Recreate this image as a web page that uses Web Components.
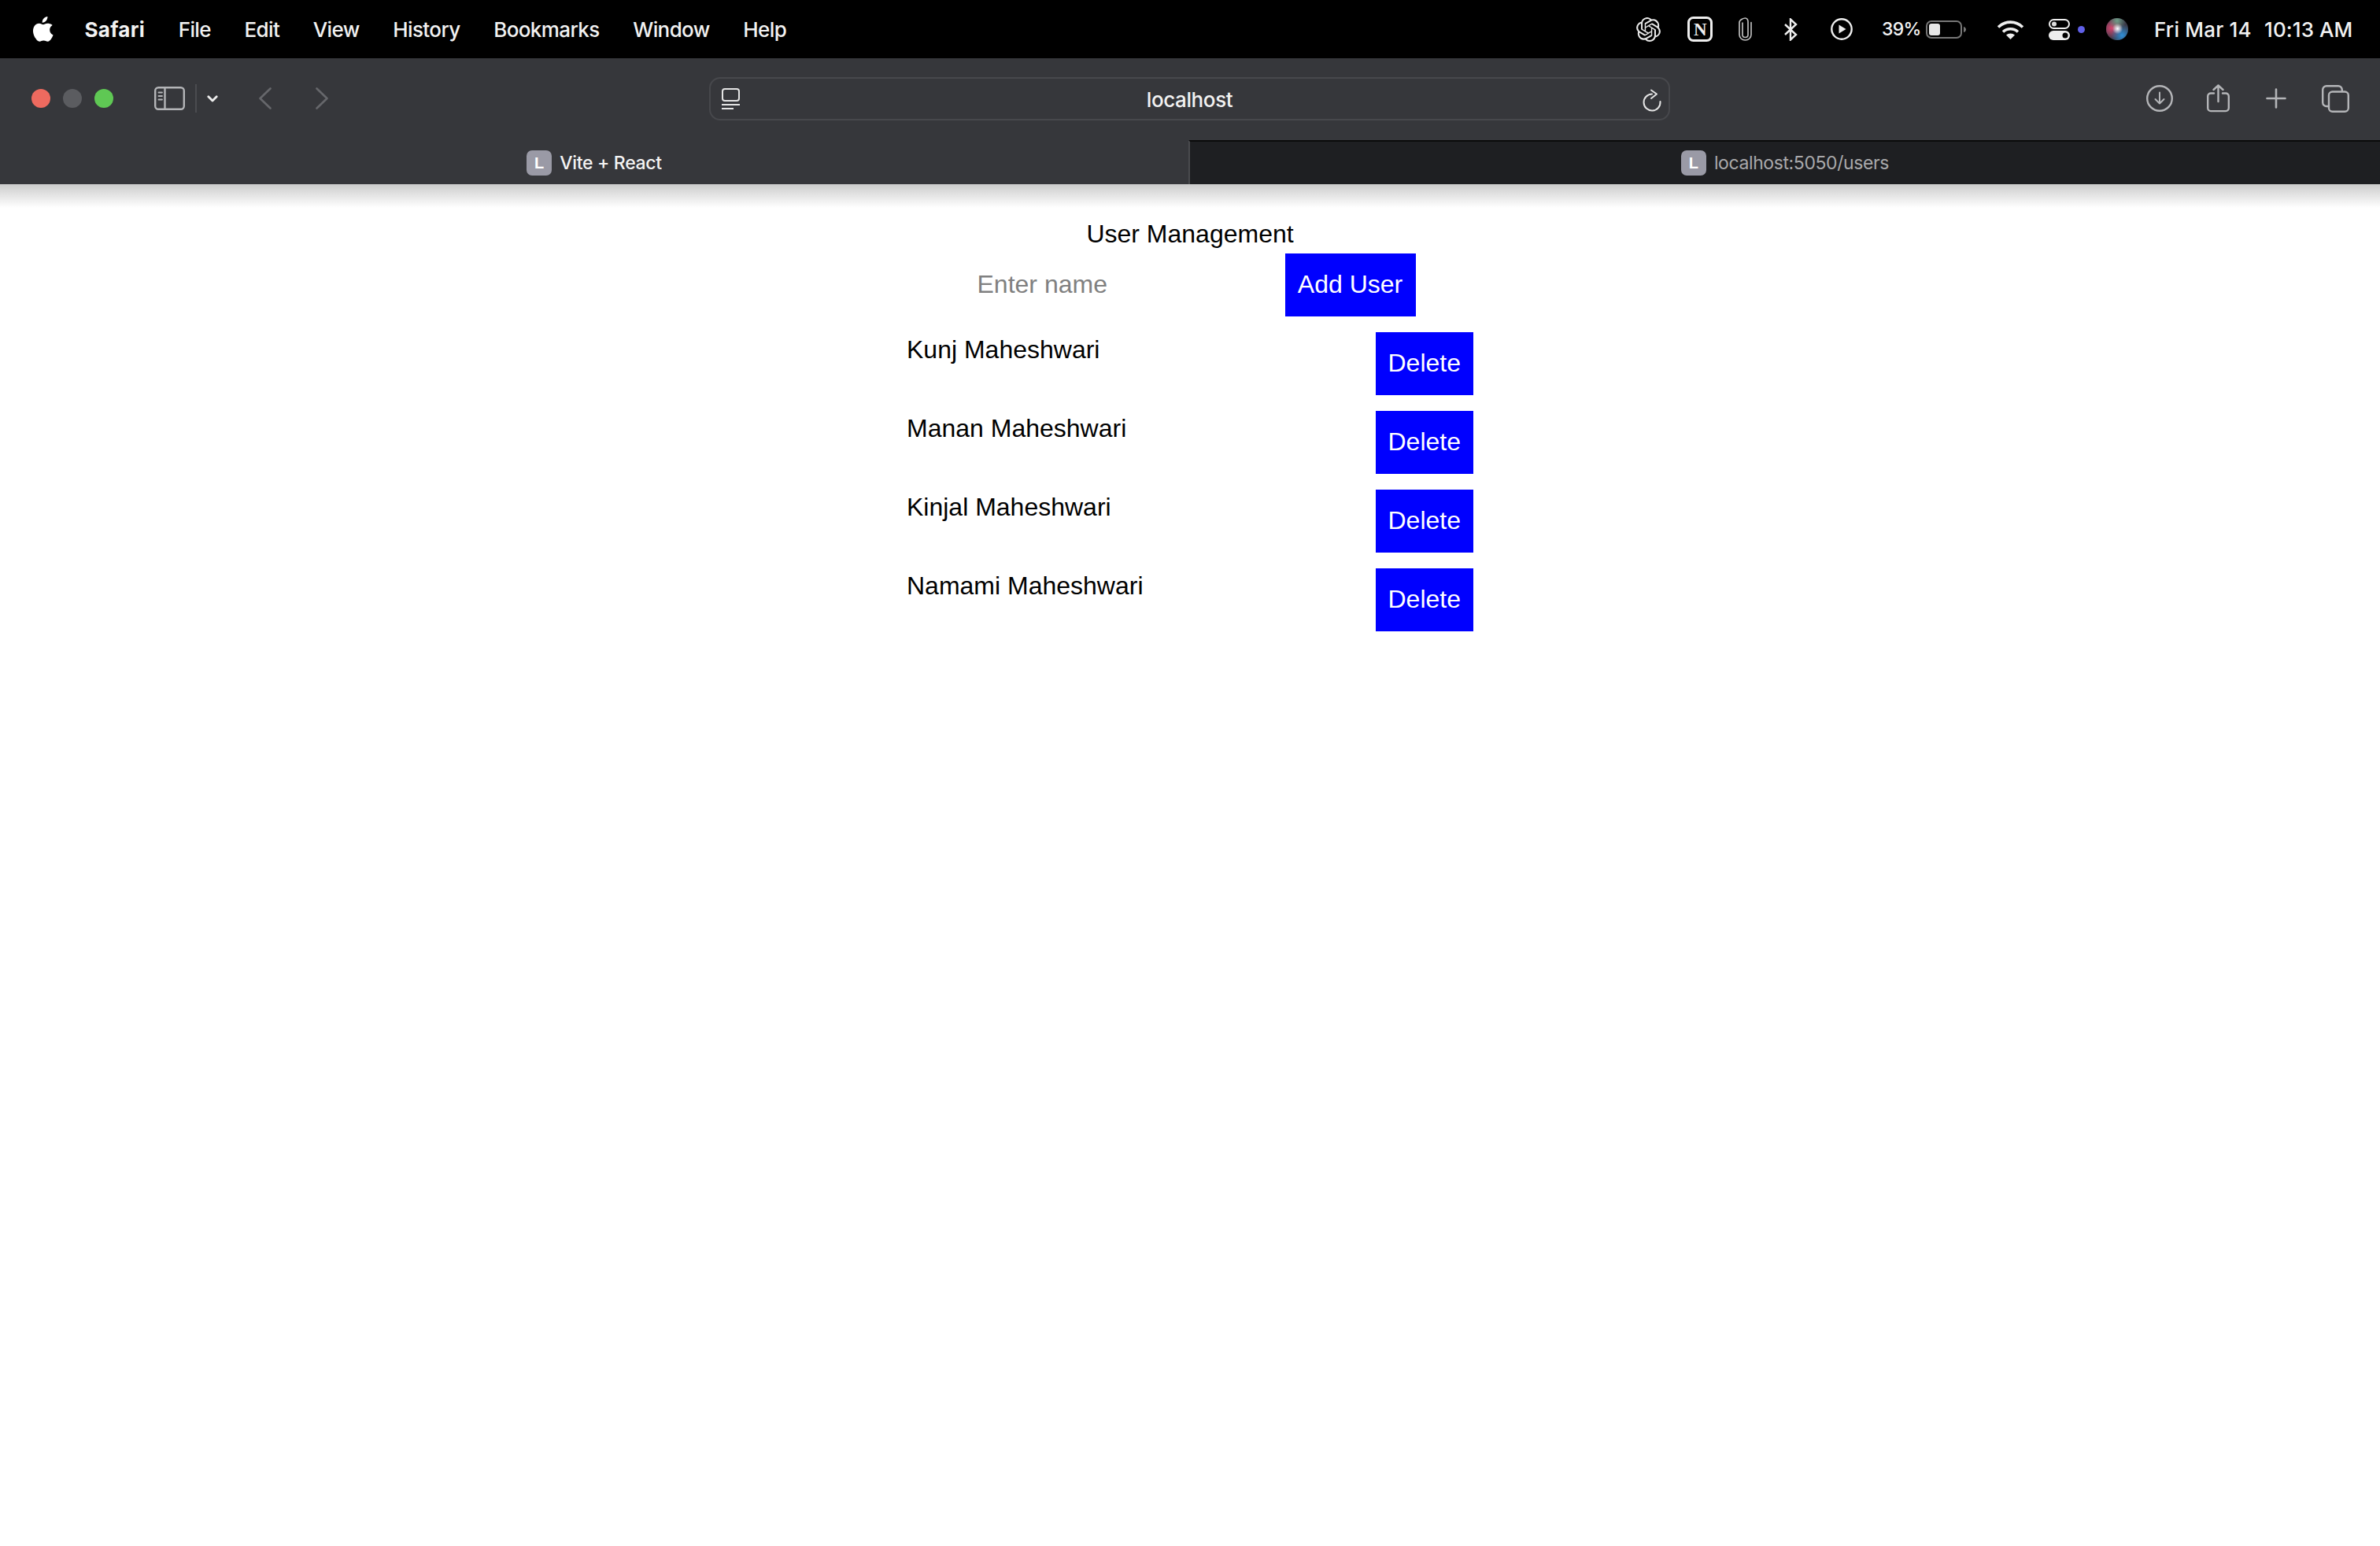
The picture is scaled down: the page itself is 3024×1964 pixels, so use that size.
<!DOCTYPE html>
<html lang="en">
<head>
<meta charset="utf-8">
<title>Vite + React</title>
<style>
  html, body { margin: 0; height: 100%; background: #fff; overflow: hidden; }
  body { display: flex; flex-direction: column; font-family: "Liberation Sans", Arial, sans-serif; }
</style>
</head>
<body>
  <mac-menubar></mac-menubar>
  <safari-toolbar></safari-toolbar>
  <safari-tabs>
    <safari-tab active label="Vite + React"></safari-tab>
    <safari-tab label="localhost:5050/users"></safari-tab>
  </safari-tabs>
  <user-management>
    <user-row name="Kunj Maheshwari"></user-row>
    <user-row name="Manan Maheshwari"></user-row>
    <user-row name="Kinjal Maheshwari"></user-row>
    <user-row name="Namami Maheshwari"></user-row>
  </user-management>

<script>
  const chromeFont = `Inter, "Noto Sans", sans-serif`;

  class MacMenubar extends HTMLElement {
    constructor() {
      super();
      this.attachShadow({ mode: 'open' });
    }

    connectedCallback() {
      const menus = ['File', 'Edit', 'View', 'History', 'Bookmarks', 'Window', 'Help'];
      this.shadowRoot.innerHTML = `
        <style>
          :host {
            display: flex;
            flex: none;
            height: 74px;
            background: #000;
            color: #f2f2f2;
            font: 500 26px ${chromeFont};
            letter-spacing: -0.6px;
            align-items: center;
            justify-content: space-between;
            padding: 0 34px 0 40px;
          }
          .left, .right { display: flex; align-items: center; }
          .left { gap: 42.5px; }
          .left svg { margin-right: -3px; }
          .app { font-weight: 700; letter-spacing: 0.3px; }
          svg { display: block; flex: none; }
          .pct { font-size: 23px; margin-left: 37px; width: 47px; letter-spacing: -0.7px; white-space: nowrap; }
          .date { margin-left: 33px; width: 122px; white-space: nowrap; letter-spacing: 0.2px; }
          .time { margin-left: 18px; width: 113px; white-space: nowrap; letter-spacing: 0.1px; }
        </style>
        <div class="left">
          <svg width="28" height="32" viewBox="0 0 28 32" fill="#fff">
            <path d="M20.4 0c.2 2-.6 3.900-1.700 5.300-1.200 1.400-3.100 2.500-5 2.400-.2-1.900.7-3.900 1.800-5.100C16.700 1.200 18.800.1 20.400 0z"/>
            <path d="M26.700 11c-.2.100-3.500 2-3.500 6 0 4.700 4.100 6.300 4.300 6.400-.1.200-.7 2.300-2.200 4.500-1.300 1.900-2.700 3.800-4.800 3.800-2.100 0-2.700-1.200-5.100-1.200-2.400 0-3.200 1.200-5.100 1.200-2.100.1-3.700-2-5-3.900C2.600 24.300.5 17.500 3.300 12.700c1.400-2.400 3.900-3.900 6.500-3.900 2 0 3.900 1.400 5.100 1.400 1.200 0 3.500-1.700 5.900-1.400 1 0 3.900.4 5.900 2.200z"/>
          </svg>
          <span class="app">Safari</span>
          ${menus.map(m => `<span>${m}</span>`).join('')}
        </div>
        <div class="right">
          <svg width="31" height="31" viewBox="0 0 24 24" fill="#e8e8e8">
            <path d="M22.2819 9.8211a5.9847 5.9847 0 0 0-.5157-4.9108 6.0462 6.0462 0 0 0-6.5098-2.9A6.0651 6.0651 0 0 0 4.9807 4.1818a5.9847 5.9847 0 0 0-3.9977 2.9 6.0462 6.0462 0 0 0 .7427 7.0966 5.98 5.98 0 0 0 .511 4.9107 6.051 6.051 0 0 0 6.5146 2.9001A5.9847 5.9847 0 0 0 13.2599 24a6.0557 6.0557 0 0 0 5.7718-4.2058 5.9894 5.9894 0 0 0 3.9977-2.9001 6.0557 6.0557 0 0 0-.7475-7.0729zm-9.022 12.6081a4.4755 4.4755 0 0 1-2.8764-1.0408l.1419-.0804 4.7783-2.7582a.7948.7948 0 0 0 .3927-.6813v-6.7369l2.02 1.1686a.071.071 0 0 1 .038.052v5.5826a4.504 4.504 0 0 1-4.4945 4.4944zm-9.6607-4.1254a4.4708 4.4708 0 0 1-.5346-3.0137l.142.0852 4.783 2.7582a.7712.7712 0 0 0 .7806 0l5.8428-3.3685v2.3324a.0804.0804 0 0 1-.0332.0615L9.74 19.9502a4.4992 4.4992 0 0 1-6.1408-1.6464zM2.3408 7.8956a4.485 4.485 0 0 1 2.3655-1.9728V11.6a.7664.7664 0 0 0 .3879.6765l5.8144 3.3543-2.0201 1.1685a.0757.0757 0 0 1-.071 0l-4.8303-2.7865A4.504 4.504 0 0 1 2.3408 7.872zm16.5963 3.8558L13.1038 8.364 15.1192 7.2a.0757.0757 0 0 1 .071 0l4.8303 2.7913a4.4944 4.4944 0 0 1-.6765 8.1042v-5.6772a.79.79 0 0 0-.407-.667zm2.0107-3.0231l-.142-.0852-4.7735-2.7818a.7759.7759 0 0 0-.7854 0L9.409 9.2297V6.8974a.0662.0662 0 0 1 .0284-.0615l4.8303-2.7866a4.4992 4.4992 0 0 1 6.6802 4.66zM8.3065 12.863l-2.02-1.1638a.0804.0804 0 0 1-.038-.0567V6.0742a4.4992 4.4992 0 0 1 7.3757-3.4537l-.142.0805L8.704 5.459a.7948.7948 0 0 0-.3927.6813zm1.0976-2.3654l2.602-1.4998 2.6069 1.4998v2.9994l-2.5974 1.4997-2.6067-1.4997Z"/>
          </svg>
          <svg style="margin-left:34px" width="32" height="32" viewBox="0 0 32 32">
            <rect x="1.500" y="1.500" width="29" height="29" rx="6" fill="none" stroke="#eee" stroke-width="3"/>
            <text x="16" y="24" text-anchor="middle" font-family="Liberation Serif" font-weight="700" font-size="23" fill="#eee">N</text>
          </svg>
          <svg style="margin-left:33px" width="17" height="30" viewBox="0 0 17 30" fill="none" stroke="#bbb" stroke-width="1.700" stroke-linecap="round">
            <path d="M5 7v15c0 2 1.500 3.500 3.500 3.500S12 24 12 22V5.500C12 3 10.500 1 8.500 1S1 3 1 6.500V22c0 4 3.300 7 7.500 7s7.500-3 7.500-7V6.500"/>
          </svg>
          <svg style="margin-left:41px" width="17" height="29" viewBox="0 0 17 29" fill="none" stroke="#eee" stroke-width="2.400">
            <path d="M1 8l14 13-7 6.500V1.500l7 6.500L1 21"/>
          </svg>
          <svg style="margin-left:42px" width="28" height="28" viewBox="0 0 28 28">
            <circle cx="14" cy="14" r="12.700" fill="none" stroke="#eee" stroke-width="2.400"/>
            <path d="M10.500 8.500v11l9-5.500z" fill="#eee"/>
          </svg>
          <span class="pct">39%</span>
          <svg style="margin-left:9px" width="51" height="23" viewBox="0 0 51 23">
            <rect x="1" y="1" width="44" height="21" rx="6" fill="none" stroke="#777" stroke-width="2"/>
            <rect x="4" y="4" width="14" height="15" rx="3" fill="#e8e8e8"/>
            <path d="M48 8c2 .5 3 2 3 3.500s-1 3-3 3.500z" fill="#777"/>
          </svg>
          <svg style="margin-left:39px" width="35" height="25" viewBox="0 0 35 25" fill="none" stroke="#eee" stroke-width="3.600">
            <path d="M2 9.500C11 1 24 1 33 9.500"/>
            <path d="M8 15.500c5.500-5 13.500-5 19 0"/>
            <path d="M17.500 25l-5.500-5.500c3-2.800 8-2.800 11 0z" fill="#eee" stroke="none"/>
          </svg>
          <svg style="margin-left:31px" width="27" height="27" viewBox="0 0 27 27">
            <rect x="1" y="1" width="25" height="11" rx="5.500" fill="none" stroke="#eee" stroke-width="2"/>
            <circle cx="7" cy="6.500" r="3" fill="#ddd"/>
            <rect y="15" width="27" height="12" rx="6" fill="#eee"/>
            <circle cx="21" cy="21" r="3.500" fill="#000"/>
          </svg>
          <svg style="margin-left:10px" width="9" height="9" viewBox="0 0 9 9"><circle cx="4.500" cy="4.500" r="4.500" fill="#6060e8"/></svg>
          <svg style="margin-left:27px" width="28" height="28" viewBox="0 0 28 28">
            <defs>
              <radialGradient id="s-red" cx="0.250" cy="0.450" r="0.500"><stop offset="0" stop-color="#d8456f"/><stop offset="1" stop-color="#d8456f" stop-opacity="0"/></radialGradient>
              <radialGradient id="s-blue" cx="0.720" cy="0.780" r="0.500"><stop offset="0" stop-color="#2f8fd8"/><stop offset="1" stop-color="#2f8fd8" stop-opacity="0"/></radialGradient>
              <radialGradient id="s-green" cx="0.500" cy="0.120" r="0.400"><stop offset="0" stop-color="#6f9f88"/><stop offset="1" stop-color="#6f9f88" stop-opacity="0"/></radialGradient>
              <radialGradient id="s-white" cx="0.520" cy="0.480" r="0.240"><stop offset="0" stop-color="#fff"/><stop offset="1" stop-color="#fff" stop-opacity="0"/></radialGradient>
            </defs>
            <circle cx="14" cy="14" r="14" fill="#3a3a48"/>
            <circle cx="14" cy="14" r="14" fill="url(#s-red)"/>
            <circle cx="14" cy="14" r="14" fill="url(#s-blue)"/>
            <circle cx="14" cy="14" r="14" fill="url(#s-green)"/>
            <circle cx="14" cy="14" r="14" fill="url(#s-white)"/>
          </svg>
          <span class="date">Fri Mar 14</span>
          <span class="time">10:13 AM</span>
        </div>
      `;
    }
  }

  class SafariToolbar extends HTMLElement {
    constructor() {
      super();
      this.attachShadow({ mode: 'open' });
    }

    connectedCallback() {
      this.shadowRoot.innerHTML = `
        <style>
          :host {
            display: flex;
            flex: none;
            height: 104px;
            background: #36373b;
            align-items: center;
            padding: 0 39px 2px 40px;
            box-sizing: border-box;
            position: relative;
          }
          svg { display: block; flex: none; }
          .lights { display: flex; gap: 16px; margin-right: 52px; }
          .lights i { width: 24px; height: 24px; border-radius: 50%; }
          .url {
            position: absolute;
            left: 901px;
            top: 24px;
            width: 1221px;
            height: 55px;
            box-sizing: border-box;
            border: 2px solid #47484c;
            border-radius: 14px;
            padding-top: 2px;
            display: flex;
            align-items: center;
            justify-content: center;
            color: #f2f2f2;
            font: 500 26px ${chromeFont};
            letter-spacing: -0.4px;
          }
          .url .page { position: absolute; left: 14px; top: 12px; }
          .url .reload { position: absolute; right: 9px; top: 13px; }
          .right { margin-left: auto; display: flex; align-items: center; }
        </style>
        <div class="lights">
          <i style="background:#ee6a5f"></i><i style="background:#5b5c60"></i><i style="background:#5fc854"></i>
        </div>
        <svg width="39" height="30" viewBox="0 0 39 30" fill="none" stroke="#b4b5b8" stroke-width="2.400">
          <rect x="1.200" y="1.200" width="36.600" height="27.600" rx="4"/>
          <path d="M13.500 1.200v27.600"/>
          <path d="M5.500 7.500h4.500M5.500 12h4.500M5.500 16.500h4.500" stroke-width="1.800" stroke-linecap="round"/>
        </svg>
        <svg style="margin-left:13px" width="2" height="36"><rect width="2" height="36" fill="#4b4c50"/></svg>
        <svg style="margin-left:13px" width="14" height="9" viewBox="0 0 14 9" fill="none" stroke="#eee" stroke-width="2.800" stroke-linecap="round" stroke-linejoin="round">
          <path d="M1.800 1.800L7 7l5.200-5.200"/>
        </svg>
        <svg style="margin-left:52px" width="16" height="28" viewBox="0 0 16 28" fill="none" stroke="#66676b" stroke-width="2.600" stroke-linecap="round" stroke-linejoin="round">
          <path d="M14.500 1.500L1.500 14l13 12.500"/>
        </svg>
        <svg style="margin-left:56px" width="16" height="28" viewBox="0 0 16 28" fill="none" stroke="#66676b" stroke-width="2.600" stroke-linecap="round" stroke-linejoin="round">
          <path d="M1.500 1.500L14.500 14l-13 12.500"/>
        </svg>
        <div class="url">
          <svg class="page" width="23" height="27" viewBox="0 0 23 27" fill="none" stroke="#e4e4e4" stroke-width="2">
            <rect x="1" y="1" width="21" height="15" rx="3"/>
            <path d="M0 21h23M0 26h15"/>
          </svg>
          localhost
          <svg class="reload" width="24" height="29" viewBox="0 0 24 29" fill="none" stroke="#e4e4e4" stroke-width="2" stroke-linecap="round" stroke-linejoin="round">
            <path d="M12 6.500A10.500 10.500 0 1 0 22.500 16"/>
            <path d="M11 1.500L18 6.500L11 12"/>
          </svg>
        </div>
        <div class="right">
          <svg width="34" height="34" viewBox="0 0 34 34" fill="none" stroke="#b4b5b8" stroke-width="2.400" stroke-linecap="round" stroke-linejoin="round">
            <circle cx="17" cy="17" r="15.800"/>
            <path d="M17 9.500v14M11.500 18l5.500 5.500 5.500-5.500" stroke-width="2"/>
          </svg>
          <svg style="margin-left:43px" width="29" height="36" viewBox="0 0 29 36" fill="none" stroke="#b4b5b8" stroke-width="2.400" stroke-linecap="round" stroke-linejoin="round">
            <path d="M9 11.500H5a3.800 3.800 0 0 0-3.800 3.800v15a3.800 3.800 0 0 0 3.800 3.800h19a3.800 3.800 0 0 0 3.800-3.800v-15a3.800 3.800 0 0 0-3.800-3.800h-4"/>
            <path d="M14.500 22V1.500M8.500 7l6-5.500 6 5.500"/>
          </svg>
          <svg style="margin-left:46px" width="26" height="26" viewBox="0 0 26 26" stroke="#b4b5b8" stroke-width="2.600" stroke-linecap="round">
            <path d="M13 1.500v23M1.500 13h23"/>
          </svg>
          <svg style="margin-left:45px" width="35" height="35" viewBox="0 0 35 35" fill="none" stroke="#b4b5b8" stroke-width="2.400">
            <path d="M8.500 27H6a4.800 4.800 0 0 1-4.800-4.800V6A4.800 4.800 0 0 1 6 1.200h15A4.800 4.800 0 0 1 25.800 6v2"/>
            <rect x="9" y="8.500" width="24.800" height="25.300" rx="4.500"/>
          </svg>
        </div>
      `;
    }
  }

  class SafariTabs extends HTMLElement {
    constructor() {
      super();
      this.attachShadow({ mode: 'open' });
      this.shadowRoot.innerHTML = `
        <style>
          :host {
            display: flex;
            flex: none;
            height: 56px;
            background: #36373b;
            position: relative;
          }
          /* soft shadow the tab bar drops on the page */
          :host::after {
            content: '';
            position: absolute;
            left: 0;
            right: 0;
            top: 100%;
            height: 30px;
            background: linear-gradient(rgba(0, 0, 0, 0.2), rgba(0, 0, 0, 0));
          }
        </style>
        <slot></slot>
      `;
    }
  }

  class SafariTab extends HTMLElement {
    constructor() {
      super();
      this.attachShadow({ mode: 'open' });
    }

    connectedCallback() {
      this.shadowRoot.innerHTML = `
        <style>
          :host {
            flex: 1;
            display: flex;
            align-items: center;
            justify-content: center;
            gap: 10px;
            box-sizing: border-box;
            border-top: 2px solid transparent;
            font: 500 23px ${chromeFont};
            letter-spacing: -0.3px;
            color: #f4f4f4;
          }
          :host([active]) { flex: 0 0 1510px; }
          :host(:not([active])) {
            background: #1e1f22;
            color: #a9a9ab;
            font-weight: 400;
            letter-spacing: -0.4px;
            border-top-color: #0b0b0c;
            border-left: 2px solid #4a4b4e;
          }
          .fav {
            width: 32px;
            height: 32px;
            border-radius: 7px;
            background: #9a9aa6;
            color: #fff;
            font: 700 20px "Liberation Sans", sans-serif;
            letter-spacing: 0;
            display: grid;
            place-items: center;
          }
        </style>
        <span class="fav">L</span>
        <span>${this.getAttribute('label')}</span>
      `;
    }
  }

  class UserManagement extends HTMLElement {
    constructor() {
      super();
      this.attachShadow({ mode: 'open' });
      this.shadowRoot.innerHTML = `
        <style>
          :host {
            display: flex;
            flex-direction: column;
            align-items: center;
            flex: 1;
            padding-top: 45px;
            color: #000;
            font: 32px "Liberation Sans", Arial, sans-serif;
          }
          h1 { font: inherit; margin: 0 0 6px; line-height: 37px; }
          form { display: flex; margin: 0 0 20px; }
          input {
            width: 407px;
            height: 80px;
            box-sizing: border-box;
            border: 0;
            outline: 0;
            padding: 0 16px 2px;
            font: inherit;
            background: #fff;
          }
          input::placeholder { color: #808080; opacity: 1; }
          button {
            width: 166px;
            height: 80px;
            padding: 0 0 2px;
            border: 0;
            background: #0000ff;
            color: #fff;
            font: inherit;
          }
          .list { width: 720px; display: flex; flex-direction: column; gap: 20px; }
        </style>
        <h1>User Management</h1>
        <form onsubmit="return false">
          <input type="text" placeholder="Enter name">
          <button type="button">Add User</button>
        </form>
        <div class="list"><slot></slot></div>
      `;
    }
  }

  class UserRow extends HTMLElement {
    constructor() {
      super();
      this.attachShadow({ mode: 'open' });
    }

    connectedCallback() {
      this.shadowRoot.innerHTML = `
        <style>
          :host {
            display: flex;
            justify-content: space-between;
            align-items: flex-start;
            font: 32px "Liberation Sans", Arial, sans-serif;
          }
          span { line-height: 45px; }
          button {
            height: 80px;
            padding: 0 16px 2px;
            border: 0;
            background: #0000ff;
            color: #fff;
            font: inherit;
          }
        </style>
        <span>${this.getAttribute('name')}</span>
        <button type="button">Delete</button>
      `;
    }
  }

  customElements.define('mac-menubar', MacMenubar);
  customElements.define('safari-toolbar', SafariToolbar);
  customElements.define('safari-tabs', SafariTabs);
  customElements.define('safari-tab', SafariTab);
  customElements.define('user-management', UserManagement);
  customElements.define('user-row', UserRow);
</script>
</body>
</html>
